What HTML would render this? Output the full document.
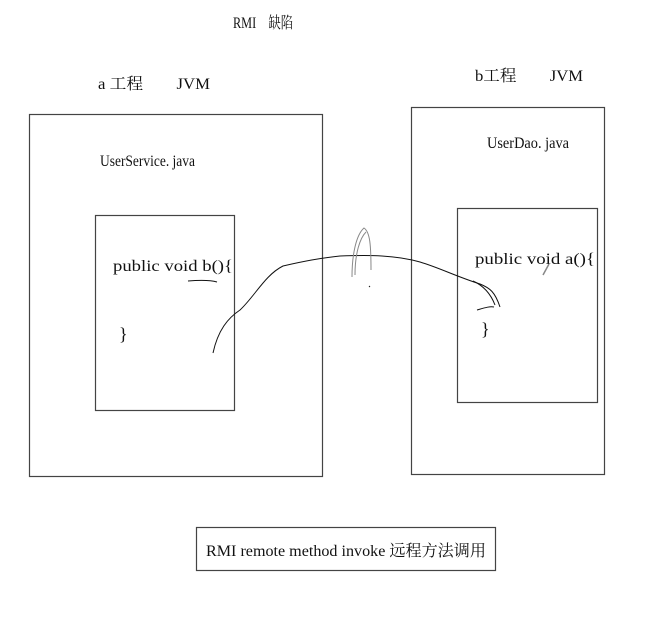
<!DOCTYPE html>
<html><head><meta charset="utf-8"><style>
html,body{margin:0;padding:0;background:#fff;width:670px;height:624px;overflow:hidden}
text{font-family:"Liberation Serif","Noto Serif CJK SC",serif;font-size:16px;fill:#111}
</style></head><body>
<svg width="670" height="624" viewBox="0 0 670 624" xmlns="http://www.w3.org/2000/svg">
<g fill="none" stroke="#444" stroke-width="1.2">
<rect x="29.5" y="114.5" width="293" height="362"/>
<rect x="95.5" y="215.5" width="139" height="195"/>
<rect x="411.5" y="107.5" width="193" height="367"/>
<rect x="457.5" y="208.5" width="140" height="194"/>
<rect x="196.5" y="527.5" width="299" height="43"/>
</g>
<text x="233" y="28" textLength="60" lengthAdjust="spacingAndGlyphs">RMI　缺陷</text>
<text x="98" y="89" textLength="112" lengthAdjust="spacingAndGlyphs">a 工程　　JVM</text>
<text x="475" y="81" textLength="108" lengthAdjust="spacingAndGlyphs">b工程　　JVM</text>
<text x="100" y="166" textLength="95" lengthAdjust="spacingAndGlyphs">UserService. java</text>
<text x="487" y="148" textLength="82" lengthAdjust="spacingAndGlyphs">UserDao. java</text>
<text x="113" y="271" textLength="120" lengthAdjust="spacingAndGlyphs">public void b(){</text>
<text x="119" y="340" style="font-size:18px">}</text>
<text x="475" y="264" textLength="120" lengthAdjust="spacingAndGlyphs">public void a(){</text>
<text x="481" y="335" style="font-size:18px">}</text>
<text x="206" y="556" textLength="280" lengthAdjust="spacingAndGlyphs">RMI remote method invoke  远程方法调用</text>
<g fill="none" stroke="#111" stroke-width="1">
<path d="M213 353 C218 330 228 318 240 310 C255 296 265 275 283 266 C300 262 320 258 340 256 C370 255 395 255 420 262 C440 268 455 276 480 284 C490 288 495 292 500 307"/>
<path d="M473 281 C482 285 490 292 495 305"/>
<path d="M477 310 C484 308 490 306 494 307"/>
<path d="M188 281 C200 280 210 280 217 282"/>
<path d="M352 277 C352 255 356 235 364 228 C370 232 371 245 371 270" stroke="#888"/>
<path d="M355 275 C355 253 360 238 366 232" stroke="#888"/>
<path d="M369 286 l1 1"/>
<path d="M543 275 L549 264" stroke="#888" stroke-width="1.5"/>
</g>
</svg>
</body></html>
